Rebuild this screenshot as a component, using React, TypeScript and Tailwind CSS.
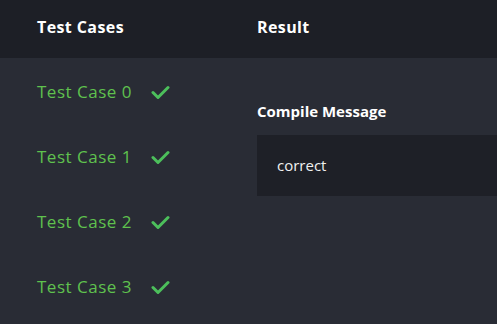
import React from "react";

const cases = ["Test Case 0", "Test Case 1", "Test Case 2", "Test Case 3"];

function Check() {
    return (
        <svg width="19" height="15" viewBox="0 0 19 15" fill="none">
            <path d="M2 7.5 L7 12.5 L17 2.5" stroke="#4cbf5b" strokeWidth="3" strokeLinecap="round" strokeLinejoin="round" />
        </svg>
    );
}

export default function App() {
    return (
        <div className="w-[497px] h-[324px] bg-[#292c35] overflow-hidden" style={{ fontFamily: "'Open Sans', sans-serif" }}>
            <div className="flex h-[58px] bg-[#1d1f26] items-center pb-[4px] text-white font-bold text-[16px] tracking-[0.4px]">
                <div className="w-[257px] pl-[37px]">Test Cases</div>
                <div>Result</div>
            </div>
            <div className="flex">
                <div className="w-[257px] pl-[37px]">
                    {cases.map((c) => (
                        <div key={c} className="flex items-center h-[65px] pt-[3px] text-[#5fc24e] text-[17px] tracking-[0.5px]">
                            <span>{c}</span>
                            <span className="ml-[19px]">
                                <Check />
                            </span>
                        </div>
                    ))}
                </div>
                <div className="flex-1 pt-[43px]">
                    <div className="text-white font-bold text-[15px] leading-[20px]">Compile Message</div>
                    <div className="mt-[14px] h-[61px] bg-[#1e2027] flex items-center pl-[20px] text-[#f0f0f0] text-[15px]">
                        correct
                    </div>
                </div>
            </div>
        </div>
    );
}
